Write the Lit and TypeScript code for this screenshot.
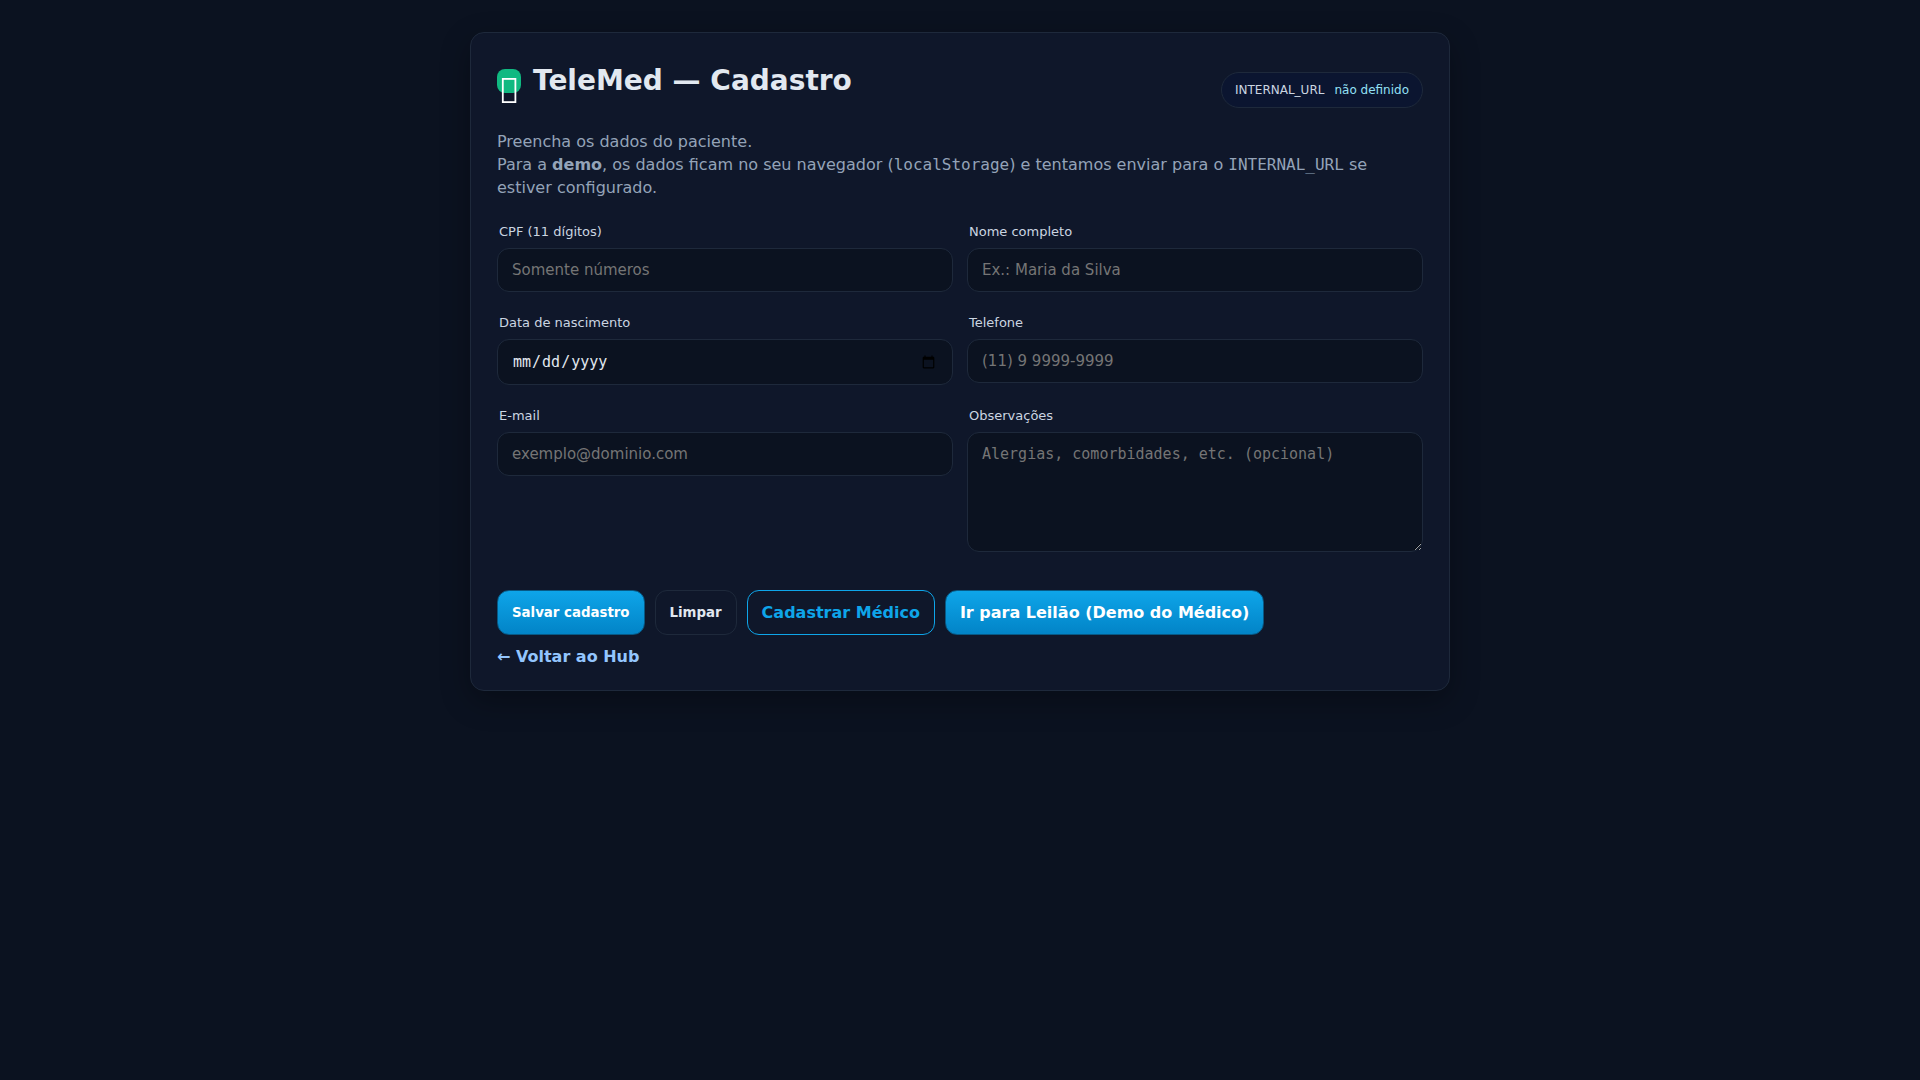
import { LitElement, html, css } from "lit";
import { customElement } from "lit/decorators.js";

@customElement("app-root")
export class AppRoot extends LitElement {
  static styles = css`
    :host {
      display: block;
      box-sizing: border-box;
      min-height: 100vh;
      padding: 32px 16px;
      background: #0b1220;
      color: #e2e8f0;
      font: 16px/23px "DejaVu Sans", sans-serif;
    }
    * {
      box-sizing: border-box;
    }
    .card {
      max-width: 980px;
      margin: 0 auto;
      padding: 27px 26px 22px;
      background: #0f172a;
      border: 1px solid #1e293b;
      border-radius: 14px;
      box-shadow: 0 10px 30px rgba(0, 0, 0, 0.3);
    }
    .header {
      display: flex;
      align-items: center;
      justify-content: space-between;
      gap: 12px;
    }
    .title {
      display: flex;
      align-items: center;
      gap: 12px;
      margin: 0 0 19px;
      font-size: 28px;
      line-height: 41px;
      font-weight: 700;
    }
    .logo {
      flex: none;
      width: 24px;
      height: 24px;
      overflow: visible;
    }
    .badge {
      display: flex;
      gap: 10px;
      padding: 8px 13px;
      border: 1px solid #1e293b;
      border-radius: 999px;
      background: #0b1530;
      color: #cbd5e1;
      font-size: 12px;
      line-height: 18px;
    }
    .badge-value {
      color: #93e0f5;
    }
    .intro {
      margin: 10px 0 23px;
      color: #94a3b8;
    }
    code {
      font: 16px/23px "DejaVu Sans Mono", monospace;
    }
    .grid {
      display: grid;
      grid-template-columns: repeat(auto-fit, minmax(300px, 1fr));
      align-items: start;
      gap: 21px 14px;
    }
    .field {
      display: grid;
      gap: 7px;
    }
    .label {
      margin-left: 2px;
      color: #cbd5e1;
      font-size: 13px;
      line-height: 19px;
    }
    .control {
      display: block;
      width: 100%;
      margin: 0;
      padding: 12px 14px;
      border: 1px solid #1e293b;
      border-radius: 12px;
      outline: none;
      background: #0b1220;
      color: #e2e8f0;
      font-family: "DejaVu Sans", sans-serif;
      font-size: 15px;
    }
    .mono {
      font-family: "DejaVu Sans Mono", monospace;
    }
    .notes {
      height: 120px;
      resize: vertical;
    }
    .actions {
      display: flex;
      flex-wrap: wrap;
      gap: 10px;
      margin: 38px 0 10px;
    }
    .btn {
      padding: 10px 14px;
      border: 1px solid #1e293b;
      border-radius: 12px;
      background: transparent;
      color: #e2e8f0;
      font-family: "DejaVu Sans", sans-serif;
      font-weight: 700;
      line-height: 23px;
      text-decoration: none;
      cursor: pointer;
    }
    .primary {
      border-color: #075985;
      background: linear-gradient(180deg, #0ea5e9, #0284c7);
      color: #fff;
    }
    .outline {
      border-color: #0ea5e9;
      color: #0ea5e9;
    }
    .back {
      color: #93c5fd;
      font-weight: 700;
      text-decoration: none;
    }
  `;

  render() {
    return html`
      <main class="card">
        <header class="header">
          <h1 class="title">
            <svg class="logo" viewBox="0 0 24 24" aria-hidden="true">
              <rect width="24" height="24" rx="8" fill="#10b981" />
              <rect x="5.8" y="9.9" width="12.6" height="23.2" fill="none" stroke="#fff" stroke-width="1.8" />
            </svg>
            TeleMed — Cadastro
          </h1>
          <div class="badge">
            <span>INTERNAL_URL</span>
            <span class="badge-value">não definido</span>
          </div>
        </header>
        <p class="intro">
          Preencha os dados do paciente.<br />
          Para a <strong>demo</strong>, os dados ficam no seu navegador
          (<code>localStorage</code>) e tentamos enviar para o
          <code>INTERNAL_URL</code> se estiver configurado.
        </p>
        <form @submit=${(e: Event) => e.preventDefault()}>
          <div class="grid">
            <div class="field">
              <label class="label" for="cpf">CPF (11 dígitos)</label>
              <input class="control" id="cpf" inputmode="numeric" maxlength="11" placeholder="Somente números" />
            </div>
            <div class="field">
              <label class="label" for="nome">Nome completo</label>
              <input class="control" id="nome" placeholder="Ex.: Maria da Silva" />
            </div>
            <div class="field">
              <label class="label" for="nascimento">Data de nascimento</label>
              <input class="control mono" id="nascimento" type="date" />
            </div>
            <div class="field">
              <label class="label" for="telefone">Telefone</label>
              <input class="control" id="telefone" type="tel" placeholder="(11) 9 9999-9999" />
            </div>
            <div class="field">
              <label class="label" for="email">E-mail</label>
              <input class="control" id="email" type="email" placeholder="exemplo@dominio.com" />
            </div>
            <div class="field">
              <label class="label" for="obs">Observações</label>
              <textarea class="control mono notes" id="obs" placeholder="Alergias, comorbidades, etc. (opcional)"></textarea>
            </div>
          </div>
          <div class="actions">
            <button class="btn primary" type="submit">Salvar cadastro</button>
            <button class="btn" type="reset">Limpar</button>
            <a class="btn outline" href="#medico">Cadastrar Médico</a>
            <a class="btn primary" href="#leilao">Ir para Leilão (Demo do Médico)</a>
          </div>
          <nav>
            <a class="back" href="#hub">← Voltar ao Hub</a>
          </nav>
        </form>
      </main>
    `;
  }
}
